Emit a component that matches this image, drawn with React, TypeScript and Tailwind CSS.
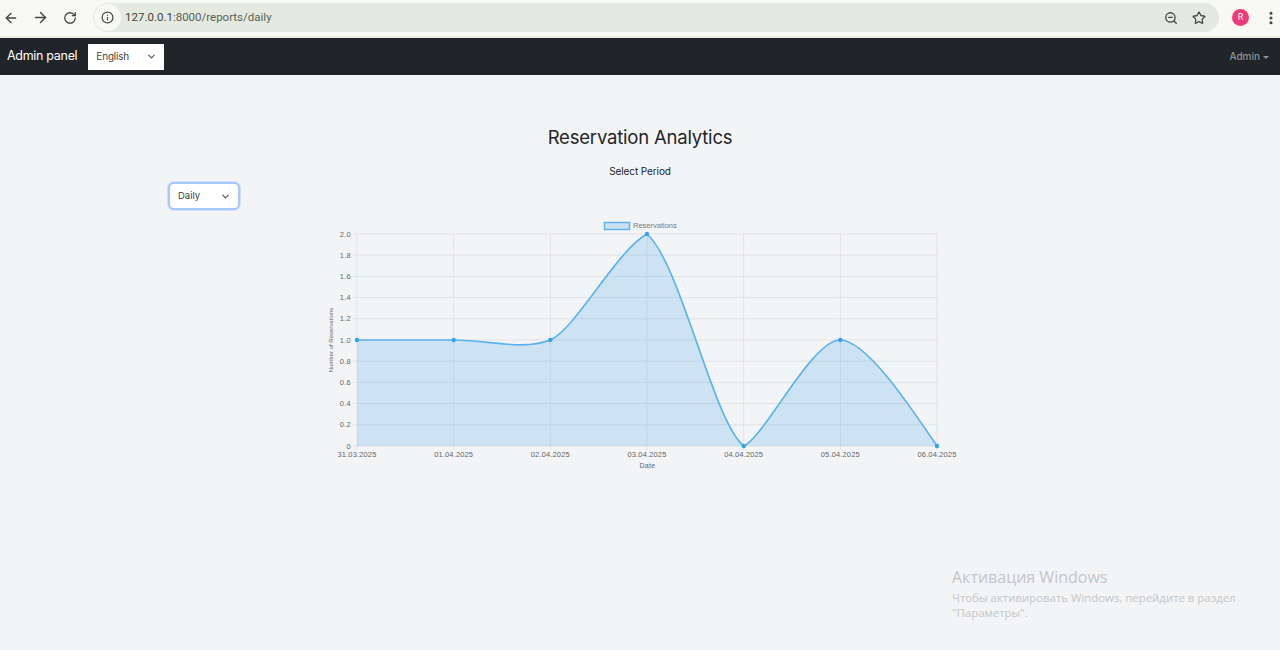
import { ArrowLeft, ArrowRight, ChevronDown, EllipsisVertical, Info, RotateCw, Star, ZoomOut } from "lucide-react";

const LEFT = 37;
const TOP = 14;
const WIDTH = 580;
const HEIGHT = 212;
const BOTTOM = TOP + HEIGHT;

const labels = ["31.03.2025", "01.04.2025", "02.04.2025", "03.04.2025", "04.04.2025", "05.04.2025", "06.04.2025"];
const values = [1, 1, 1, 2, 0, 1, 0];
const ticks = ["2.0", "1.8", "1.6", "1.4", "1.2", "1.0", "0.8", "0.6", "0.4", "0.2", "0"];

const points = values.map((v, i) => ({
  x: LEFT + (WIDTH / 6) * i,
  y: BOTTOM - (v / 2) * HEIGHT,
}));

const line =
  "M37 120 C69 120 102 120 134 120 C170 120 202 131 230 120 C255 110 297 30 327 14 C360 42 394 204 424 226 C445 216 492 120 520 120 C546 120 590 186 617 226";

function ReservationChart() {
  const area = `${line} L${LEFT + WIDTH} ${BOTTOM} L${LEFT} ${BOTTOM} Z`;

  return (
    <svg width="640" height="252" viewBox="0 0 640 252" className="block">
      {/* legend */}
      <rect x="284.5" y="2.5" width="25" height="7" fill="#cbe1f3" stroke="#5fb3ee" strokeWidth="1.5" />
      <text x="313" y="8" fontSize="7.5" fill="#777" fontFamily="Liberation Sans, sans-serif">Reservations</text>

      {/* grid */}
      {ticks.map((t, i) => {
        const y = TOP + (HEIGHT / 10) * i;
        return (
          <g key={t}>
            <line x1={LEFT - 4} x2={LEFT + WIDTH} y1={y} y2={y} stroke="#e2e3e5" />
            <text x={LEFT - 6} y={y + 2.5} fontSize="7.5" fill="#666" textAnchor="end" fontFamily="Liberation Sans, sans-serif" letterSpacing="0.3">{t}</text>
          </g>
        );
      })}
      {labels.map((l, i) => {
        const x = LEFT + (WIDTH / 6) * i;
        return (
          <g key={l}>
            <line x1={x} x2={x} y1={TOP} y2={BOTTOM + 4} stroke="#e2e3e5" />
            <text x={x} y={BOTTOM + 11} fontSize="7.5" fill="#666" textAnchor="middle" fontFamily="Liberation Sans, sans-serif" letterSpacing="0.15">{l}</text>
          </g>
        );
      })}

      <path d={area} fill="#36a2eb" fillOpacity="0.2" />
      <path d={line} fill="none" stroke="#5ab2ee" strokeWidth="1.6" />
      {points.map((p) => (
        <circle key={p.x} cx={p.x} cy={p.y} r="2.2" fill="#36a2eb" />
      ))}

      {/* axis titles */}
      <text x="327.5" y={BOTTOM + 22} fontSize="7" fill="#666" textAnchor="middle" fontFamily="Liberation Sans, sans-serif" letterSpacing="0.3">Date</text>
      <text transform="translate(13 120) rotate(-90)" fontSize="6" fill="#666" textAnchor="middle" fontFamily="Liberation Sans, sans-serif">Number of Reservations</text>
    </svg>
  );
}

export default function App() {
  return (
    <div className="relative flex h-[650px] w-[1280px] flex-col overflow-hidden bg-[#f3f4f6] font-['Inter',sans-serif]">
      {/* browser toolbar */}
      <div className="flex h-[38px] items-center border-b-2 border-[#e9ebe0] bg-[#f8faf2] pb-[1px] text-[#41463f]">
        <div className="flex w-[93px] items-center gap-[13px] pl-[3px]">
          <ArrowLeft className="size-[16px]" strokeWidth={2} />
          <ArrowRight className="size-[17px]" strokeWidth={2} />
          <RotateCw className="ml-[1px] size-[14px]" strokeWidth={2.2} />
        </div>
        <div className="flex h-[29px] w-[1126px] items-center rounded-full bg-[#e4eadf] pr-[13px]">
          <div className="ml-[1px] flex size-[27px] items-center justify-center rounded-full bg-[#f8faf2]">
            <Info className="size-[13px]" strokeWidth={2.2} />
          </div>
          <span className="ml-[4px] font-['Roboto',sans-serif] text-[11.5px] text-[#3f4540]">
            127.0.0.1<span className="text-[#5a605a]">:8000/reports/daily</span>
          </span>
          <div className="ml-auto flex items-center gap-[14px]">
            <ZoomOut className="size-[14px]" strokeWidth={2.2} />
            <Star className="size-[14px]" strokeWidth={2.2} />
          </div>
        </div>
        <div className="ml-[13px] flex size-[17px] items-center justify-center rounded-full bg-[#ee3a76] font-['Roboto',sans-serif] text-[9px] text-white">R</div>
        <EllipsisVertical className="ml-[14px] size-[16px]" strokeWidth={2.6} />
      </div>

      {/* navbar */}
      <nav className="flex h-[37px] items-center bg-[#212529] pl-[7px] pr-[11px]">
        <span className="text-[12.5px] tracking-[-0.3px] text-white">Admin panel</span>
        <div className="ml-[11px] flex h-[26px] w-[76px] items-center justify-between bg-white pl-[8px] pr-[7px] text-[10px] tracking-[-0.2px] text-[#444]">
          English
          <ChevronDown className="size-[11px] text-[#555]" strokeWidth={2.5} />
        </div>
        <div className="ml-auto flex items-center gap-[3px] text-[10px] font-medium text-[#8e949b]">
          Admin
          <span className="mt-[1px] border-x-[3px] border-t-[3px] border-x-transparent border-t-[#8e949b]" />
        </div>
      </nav>

      {/* page */}
      <main className="flex flex-1 flex-col">
        <h1 className="mt-[50px] text-center text-[18.5px] leading-[25px] tracking-[-0.2px] text-[#212529]">Reservation Analytics</h1>
        <p className="mt-[13px] text-center text-[10px] leading-[16px] tracking-[-0.1px] text-[#212529]">Select Period</p>
        <div className="ml-[170px] mt-[5px] flex h-[24px] w-[68px] items-center justify-between rounded-[4px] bg-white pl-[8px] pr-[7px] text-[9.5px] text-[#444] ring-[2.5px] ring-[#a9c8fb]">
          Daily
          <ChevronDown className="size-[11px] text-[#555]" strokeWidth={2.5} />
        </div>
        <div className="ml-[320px] mt-[12px]">
          <ReservationChart />
        </div>
      </main>

      {/* activation watermark */}
      <div className="absolute left-[952px] top-[567px] font-['Open_Sans',sans-serif] text-[#c4c6c9]">
        <div className="text-[16px] leading-[20px]">Активация Windows</div>
        <div className="mt-[3px] text-[11.4px] leading-[15px]">
          Чтобы активировать Windows, перейдите в раздел
          <br />
          "Параметры".
        </div>
      </div>
    </div>
  );
}
